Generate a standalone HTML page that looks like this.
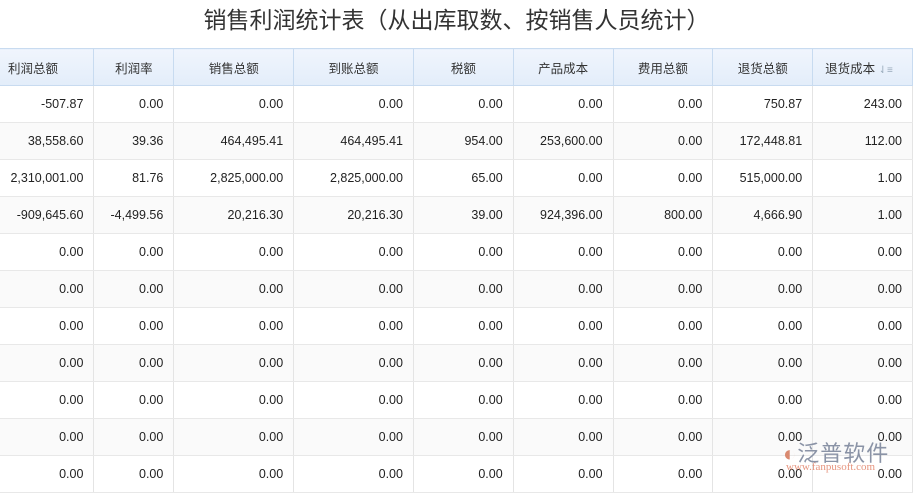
<!DOCTYPE html><html><head><meta charset="utf-8"><style>
body{margin:0;width:913px;height:484px;overflow:hidden;background:#fff;font-family:"Liberation Sans","Noto Sans CJK SC",sans-serif;position:relative}
h1{position:absolute;left:0;top:4px;width:913px;margin:0;text-align:center;font-weight:normal;font-size:23px;color:#333;line-height:32px}
table{position:absolute;top:48px;left:0;border-collapse:collapse;table-layout:fixed}
th{height:36px;padding:0;font-weight:normal;font-size:12.5px;color:#333;background:linear-gradient(#f0f5fd,#e3edfa);border-right:1px solid #c8dbf0;border-top:1px solid #c8dbf0;border-bottom:1px solid #c8dbf0;text-align:center}
td{height:36px;padding:0 10px 0 0;font-size:12.5px;color:#222;text-align:right;border-right:1px solid #e4e4e4;border-bottom:1px solid #e8e8e8}
tr:nth-child(odd) td{background:#fafafa}
.wm{position:absolute;left:783px;top:436px;color:#8a93a6;font-size:22px;letter-spacing:1px}
.wm2{position:absolute;left:786px;top:461px;color:#e07a5f;font-size:11px;font-family:"Liberation Serif",serif;opacity:.8}
</style></head><body>
<h1>销售利润统计表（从出库取数、按销售人员统计）</h1>
<table>
<colgroup><col style="width:94px"><col style="width:80px"><col style="width:120px"><col style="width:120px"><col style="width:100px"><col style="width:100px"><col style="width:100px"><col style="width:100px"><col style="width:100px"></colgroup>
<tr><th style="text-align:left;padding-left:8px">利润总额</th><th>利润率</th><th>销售总额</th><th>到账总额</th><th>税额</th><th>产品成本</th><th>费用总额</th><th>退货总额</th><th style="text-align:left;padding-left:12px">退货成本 <span style="color:#9ab;font-size:10px">⇃≡</span></th></tr>
<tr><td>-507.87</td><td>0.00</td><td>0.00</td><td>0.00</td><td>0.00</td><td>0.00</td><td>0.00</td><td>750.87</td><td>243.00</td></tr>
<tr><td>38,558.60</td><td>39.36</td><td>464,495.41</td><td>464,495.41</td><td>954.00</td><td>253,600.00</td><td>0.00</td><td>172,448.81</td><td>112.00</td></tr>
<tr><td>2,310,001.00</td><td>81.76</td><td>2,825,000.00</td><td>2,825,000.00</td><td>65.00</td><td>0.00</td><td>0.00</td><td>515,000.00</td><td>1.00</td></tr>
<tr><td>-909,645.60</td><td>-4,499.56</td><td>20,216.30</td><td>20,216.30</td><td>39.00</td><td>924,396.00</td><td>800.00</td><td>4,666.90</td><td>1.00</td></tr>
<tr><td>0.00</td><td>0.00</td><td>0.00</td><td>0.00</td><td>0.00</td><td>0.00</td><td>0.00</td><td>0.00</td><td>0.00</td></tr>
<tr><td>0.00</td><td>0.00</td><td>0.00</td><td>0.00</td><td>0.00</td><td>0.00</td><td>0.00</td><td>0.00</td><td>0.00</td></tr>
<tr><td>0.00</td><td>0.00</td><td>0.00</td><td>0.00</td><td>0.00</td><td>0.00</td><td>0.00</td><td>0.00</td><td>0.00</td></tr>
<tr><td>0.00</td><td>0.00</td><td>0.00</td><td>0.00</td><td>0.00</td><td>0.00</td><td>0.00</td><td>0.00</td><td>0.00</td></tr>
<tr><td>0.00</td><td>0.00</td><td>0.00</td><td>0.00</td><td>0.00</td><td>0.00</td><td>0.00</td><td>0.00</td><td>0.00</td></tr>
<tr><td>0.00</td><td>0.00</td><td>0.00</td><td>0.00</td><td>0.00</td><td>0.00</td><td>0.00</td><td>0.00</td><td>0.00</td></tr>
<tr><td>0.00</td><td>0.00</td><td>0.00</td><td>0.00</td><td>0.00</td><td>0.00</td><td>0.00</td><td>0.00</td><td>0.00</td></tr>
</table>
<div class="wm"><span style="color:#d98a70">◐</span>泛普软件</div>
<div class="wm2">www.fanpusoft.com</div>
</body></html>
